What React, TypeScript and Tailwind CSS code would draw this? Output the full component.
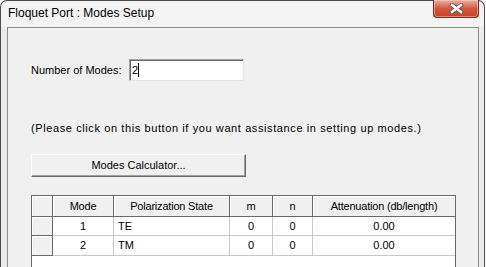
const cols = ['w-[21px]', 'w-[61px]', 'w-[116px]', 'w-[43px]', 'w-[40px]', 'w-[142px]']

const headers = ['', 'Mode', 'Polarization State', 'm', 'n', 'Attenuation (db/length)']

const rows = [
  { mode: '1', pol: 'TE', m: '0', n: '0', att: '0.00' },
  { mode: '2', pol: 'TM', m: '0', n: '0', att: '0.00' },
]

function CloseButton() {
  return (
    <div className="w-[46px] h-[18px] -mt-px rounded-b-[4px] border border-t-0 border-[#7a2a1e] bg-gradient-to-b from-[#eab0a2] via-[#d2553c] to-[#c9402a] flex items-center justify-center shadow-[inset_0_0_0_1px_rgba(255,210,200,0.5)]">
      <svg width="15" height="11" viewBox="0 0 15 11">
        <path d="M3 2 L12 9 M12 2 L3 9" stroke="#5a5a5a" strokeWidth="4.2" strokeLinecap="square" />
        <path d="M3 2 L12 9 M12 2 L3 9" stroke="#ffffff" strokeWidth="2.4" strokeLinecap="square" />
      </svg>
    </div>
  )
}

export default function App() {
  const dlg = { fontFamily: '"Liberation Sans", Arial, sans-serif' }

  return (
    <div className="w-[486px] h-[267px] overflow-hidden bg-white">
      <div className="w-[485px] h-[267px] flex flex-col border border-b-0 border-[#4b4b4b] rounded-t-[7px] bg-[#ebebeb] bg-gradient-to-b from-[#f4f4f4] to-[#e9e9e9]">
        {/* title bar */}
        <div className="h-[26px] shrink-0 flex items-start justify-between pl-[7px] pr-[5px]">
          <span className="mt-[4px] text-[12px] text-black leading-[16px]" style={dlg}>
            Floquet Port : Modes Setup
          </span>
          <CloseButton />
        </div>

        {/* frame + client */}
        <div className="flex-1 flex pl-[6px] pr-[5px] bg-[#ebebeb]">
          <div
            className="flex-1 flex flex-col border-l border-t border-r border-[#8a8a8a] bg-[#f0f0f0] pl-[23px] text-[11px] text-black"
            style={dlg}
          >
            <div className="mt-[31px] flex items-center h-[22px]">
              <span className="w-[98px]">Number of Modes:</span>
              <div className="w-[115px] h-[22px] bg-white border border-[#a0a0a0] border-b-[#e3e3e3] border-r-[#e3e3e3] shadow-[inset_1px_1px_0_#696969] flex items-center pl-[2px]">
                <span className="leading-[13px]">2</span>
                <span className="w-px h-[14px] bg-black" />
              </div>
            </div>

            <div className="mt-[41px] leading-[13px] tracking-[0.6px]">
              (Please click on this button if you want assistance in setting up modes.)
            </div>

            <button
              className="mt-[19px] w-[215px] h-[23px] bg-[#f0f0f0] border border-white border-b-[#696969] border-r-[#696969] shadow-[inset_-1px_-1px_0_#a0a0a0] flex items-center justify-center text-[11px]"
              style={dlg}
            >
              Modes Calculator...
            </button>

            {/* grid */}
            <div className="mt-[18px] w-[425px] flex-1 flex flex-col bg-white border-l border-t border-r border-[#696969]">
              <div className="flex h-[21px]">
                {headers.map((h, i) => (
                  <div
                    key={i}
                    className={`${cols[i]} h-full flex items-center justify-center bg-[#f0f0f0] border-b border-[#696969] shadow-[inset_1px_1px_0_#ffffff] tracking-[-0.2px] ${i < 5 ? 'border-r' : ''}`}
                  >
                    {h}
                  </div>
                ))}
              </div>
              {rows.map((r, ri) => (
                <div key={ri} className={`flex ${ri === 0 ? 'h-[19px]' : 'h-[20px]'}`}>
                  <div className={`${cols[0]} h-full bg-[#f0f0f0] border-r border-b border-[#696969] shadow-[inset_1px_1px_0_#ffffff]`} />
                  <div className={`${cols[1]} h-full flex items-center justify-center border-r border-b border-[#c8c8c8]`}>{r.mode}</div>
                  <div className={`${cols[2]} h-full flex items-center pl-[4px] border-r border-b border-[#c8c8c8]`}>{r.pol}</div>
                  <div className={`${cols[3]} h-full flex items-center justify-center border-r border-b border-[#c8c8c8]`}>{r.m}</div>
                  <div className={`${cols[4]} h-full flex items-center justify-center border-r border-b border-[#c8c8c8]`}>{r.n}</div>
                  <div className={`${cols[5]} h-full flex items-center justify-center border-b border-[#c8c8c8]`}>{r.att}</div>
                </div>
              ))}
            </div>
          </div>
        </div>
      </div>
    </div>
  )
}
